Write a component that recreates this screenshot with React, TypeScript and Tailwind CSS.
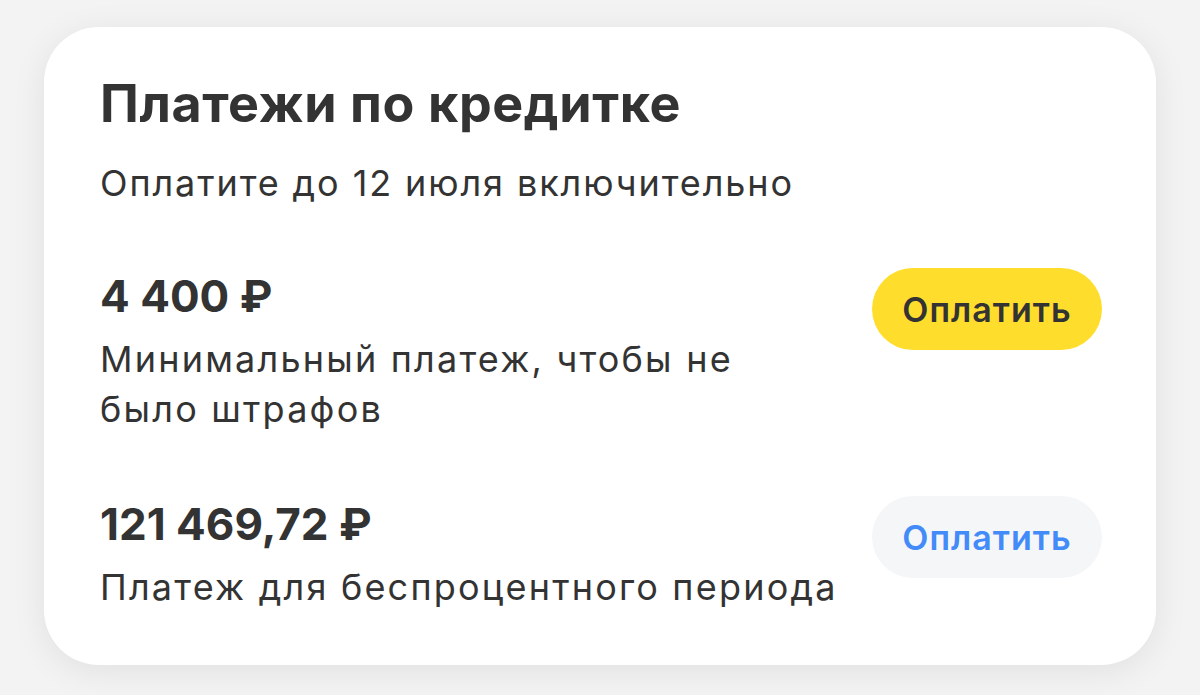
import React from 'react';

const payments = [
  {
    amount: '4 400 ₽',
    note: ['Минимальный платеж, чтобы не', 'было штрафов'],
    primary: true,
  },
  {
    amount: '121 469,72 ₽',
    note: ['Платеж для беспроцентного периода'],
    primary: false,
  },
];

export default function App() {
  return (
    <div className="min-h-screen bg-[#f3f3f3] px-[44px] pt-[27px] font-['Inter',sans-serif] text-[#333333]">
      <div className="h-[638px] rounded-[55px] bg-white pl-[56px] pr-[54px] pt-[47px] shadow-[0_6px_34px_rgba(0,0,0,0.08)]">
        {/* Header */}
        <h1 className="text-[52px] font-bold leading-[60px] tracking-[0.6px]">Платежи по кредитке</h1>
        <p className="mt-[27px] text-[36px] leading-[44px] tracking-[1.9px]">Оплатите до 12 июля включительно</p>

        {/* Payments */}
        <div className="mt-[65px] flex flex-col gap-[64px]">
          {payments.map((p) => (
            <div key={p.amount} className="flex items-start justify-between">
              <div>
                <div className="text-[44px] font-bold leading-[52px]">{p.amount}</div>
                <div className="mt-[12px] whitespace-nowrap text-[36px] leading-[50px] tracking-[2.2px]">
                  {p.note.map((line) => (
                    <div key={line}>{line}</div>
                  ))}
                </div>
              </div>
              <button
                className={
                  p.primary
                    ? 'mt-[-2px] h-[82px] w-[230px] rounded-full bg-[#ffdd2d] text-[34px] font-semibold tracking-[1px] text-[#333333]'
                    : 'mt-[-2px] h-[82px] w-[230px] rounded-full bg-[#f5f6f8] text-[34px] font-semibold tracking-[1px] text-[#428bf9]'
                }
              >
                Оплатить
              </button>
            </div>
          ))}
        </div>
      </div>
    </div>
  );
}
